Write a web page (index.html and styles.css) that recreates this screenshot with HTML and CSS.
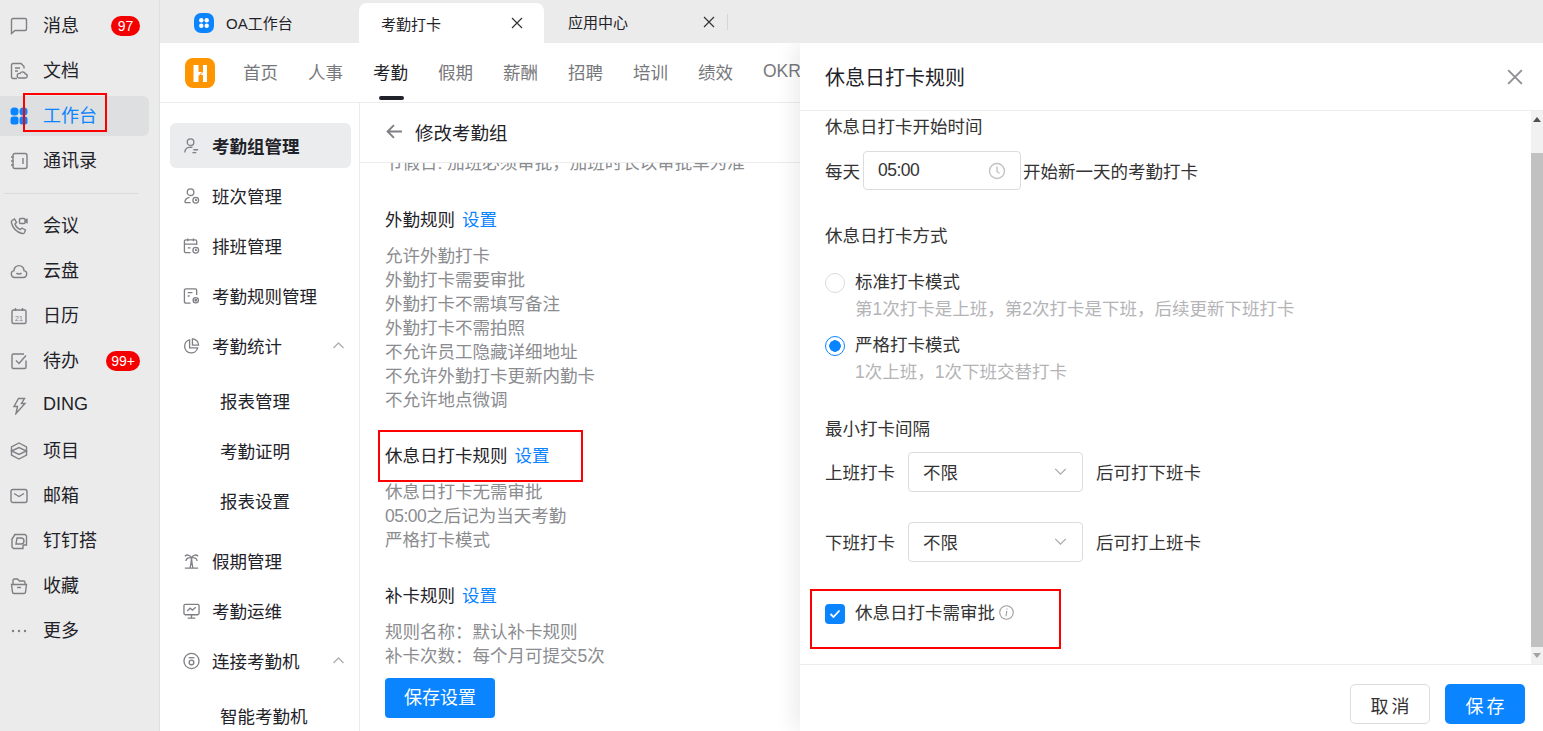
FILE: index.html
```html
<!DOCTYPE html>
<html lang="zh">
<head>
  <meta charset="UTF-8">
  <title>考勤打卡</title>
  <link rel="stylesheet" href="styles.css">
</head>
<body>
  <div class="app">
    <nav class="rail">
      <div class="rail-item"><svg class="rail-icon" viewBox="0 0 18 18"><path d="M3 1.500h12a1.500 1.500 0 0 1 1.500 1.500v9a1.500 1.500 0 0 1-1.500 1.500H5L1.500 16.500V3A1.500 1.500 0 0 1 3 1.500z"/></svg><span class="rail-label">消息</span><span class="badge">97</span></div>
      <div class="rail-item"><svg class="rail-icon" viewBox="0 0 18 18"><path d="M7 16.500H3a1.500 1.500 0 0 1-1.500-1.500V3A1.500 1.500 0 0 1 3 1.500h8l3 3v2M5 6h5M5 9h3"/><path d="M9 16h6a2 2 0 0 0 .500-4 3 3 0 0 0-5.500-.500A2.300 2.300 0 0 0 9 16z"/></svg><span class="rail-label">文档</span></div>
      <div class="rail-item active"><svg class="rail-icon" viewBox="0 0 18 18"><rect class="fill-blue" x=".500" y=".500" width="8" height="8" rx="3.500"/><rect class="fill-blue" x="9.500" y=".500" width="8" height="8" rx="3.500"/><rect class="fill-blue" x=".500" y="9.500" width="8" height="8" rx="2.500"/><rect class="fill-blue" x="9.500" y="9.500" width="8" height="8" rx="2.500"/></svg><span class="rail-label">工作台</span></div>
      <div class="rail-item"><svg class="rail-icon" viewBox="0 0 18 18"><rect x="3" y="1.500" width="14" height="15" rx="2"/><path d="M1 5h2.500M1 9h2.500M1 13h2.500M13 6v6"/></svg><span class="rail-label">通讯录</span></div>
      <div class="rail-line"></div>
      <div class="rail-item"><svg class="rail-icon" viewBox="0 0 18 18"><path d="M2 3.500 4.500 2l2 3.500L5 7c.8 2.500 2.700 4.500 5.500 5.500L12 11l3.500 2-1 2.500c-.5 1-1.500 1.300-2.500 1C6.500 15 2.800 11 1.500 6c-.2-1 0-2 .5-2.500z"/><rect x="9.500" y="1.500" width="5.500" height="5" rx="1"/><path d="M15 3.500l2-1v3l-2-1"/></svg><span class="rail-label">会议</span></div>
      <div class="rail-item"><svg class="rail-icon" viewBox="0 0 18 18"><path d="M5 15.500a3.500 3.500 0 0 1-1-6.900 5 5 0 0 1 10 0 3.500 3.500 0 0 1-1 6.900z"/><path d="M6.500 11c1 1.300 4 1.300 5 0"/></svg><span class="rail-label">云盘</span></div>
      <div class="rail-item"><svg class="rail-icon" viewBox="0 0 18 18"><rect x="2" y="3" width="14" height="13.500" rx="1.500"/><path d="M5.500 1v3M12.500 1v3"/><text class="cal-num" x="9" y="13.500">21</text></svg><span class="rail-label">日历</span></div>
      <div class="rail-item"><svg class="rail-icon" viewBox="0 0 18 18"><path d="M16 8.500V15a1.500 1.500 0 0 1-1.500 1.500H3.500A1.500 1.500 0 0 1 2 15V3.500A1.500 1.500 0 0 1 3.500 2H14"/><path d="M6 8.500l3 3 7-8"/></svg><span class="rail-label">待办</span><span class="badge wide">99+</span></div>
      <div class="rail-item"><svg class="rail-icon" viewBox="0 0 18 18"><path d="M8.500 1.500h6l-3 5h3.500L6 16.500l1.500-7H4z"/></svg><span class="rail-label">DING</span></div>
      <div class="rail-item"><svg class="rail-icon" viewBox="0 0 18 18"><path d="M9 1l7.500 4v8L9 17l-7.500-4V5z"/><path d="M1.500 9L9 5.500 16.500 9 9 12.500z"/></svg><span class="rail-label">项目</span></div>
      <div class="rail-item"><svg class="rail-icon" viewBox="0 0 18 18"><rect x="1" y="2.500" width="16" height="13" rx="2"/><path d="M4 6.500l5 3 5-3"/></svg><span class="rail-label">邮箱</span></div>
      <div class="rail-item"><svg class="rail-icon" viewBox="0 0 18 18"><path d="M4 2.500h11l1.500 1.500v9H13"/><path d="M5 2.500L2 7v8l1.500 1.500H13V13"/><path d="M7 6h4a2.500 2.500 0 0 1 0 6H6z"/></svg><span class="rail-label">钉钉搭</span></div>
      <div class="rail-item"><svg class="rail-icon" viewBox="0 0 18 18"><path d="M3 7V3.500A1.500 1.500 0 0 1 4.500 2h3l2 2h4A1.500 1.500 0 0 1 15 5.500V7"/><path d="M1.500 7.500h15L15.500 15a1.500 1.500 0 0 1-1.500 1.500H4A1.500 1.500 0 0 1 2.500 15z"/><path d="M7 10.500h4"/></svg><span class="rail-label">收藏</span></div>
      <div class="rail-item"><svg class="rail-icon" viewBox="0 0 18 18"><circle class="fill-grey" cx="3" cy="9" r="1.200"/><circle class="fill-grey" cx="9" cy="9" r="1.200"/><circle class="fill-grey" cx="15" cy="9" r="1.200"/></svg><span class="rail-label">更多</span></div>
      <div class="mark mark-work"></div>
    </nav>

    <div class="main">
      <div class="tabs">
        <div class="tab tab-oa"><span class="oa-logo"><svg viewBox="0 0 20 20"><circle cx="7.300" cy="7.300" r="2.200"/><circle cx="12.700" cy="7.300" r="2.200"/><circle cx="7.300" cy="12.700" r="2.200"/><circle cx="12.700" cy="12.700" r="2.200"/></svg></span>OA工作台</div>
        <div class="tab tab-on">考勤打卡<svg class="tab-x" viewBox="0 0 12 12"><path d="M1 1l10 10M11 1L1 11"/></svg></div>
        <div class="tab tab-app">应用中心<svg class="tab-x" viewBox="0 0 12 12"><path d="M1 1l10 10M11 1L1 11"/></svg><span class="tab-sep"></span></div>
      </div>

      <div class="page">
        <header class="top">
          <span class="h-logo"><svg viewBox="0 0 30 30"><path d="M8.500 7h5v7h3.500l-3.500 4v6h-5z"/><path d="M18 7h4v17h-4v-7h-2.500l2.500-3z"/></svg></span>
          <a class="top-link">首页</a>
          <a class="top-link">人事</a>
          <a class="top-link on">考勤</a>
          <a class="top-link">假期</a>
          <a class="top-link">薪酬</a>
          <a class="top-link">招聘</a>
          <a class="top-link">培训</a>
          <a class="top-link">绩效</a>
          <a class="top-link">OKR</a>
        </header>

        <div class="body">
          <aside class="side">
            <div class="side-item on"><svg class="side-icon" viewBox="0 0 18 18"><circle cx="8" cy="5" r="3.500"/><path d="M2 16c0-3 1.500-5 4-5.500h4M11 13h5M10 16h4"/></svg>考勤组管理</div>
            <div class="side-item"><svg class="side-icon" viewBox="0 0 18 18"><circle cx="8" cy="5" r="3.500"/><path d="M2 16c0-3 1.500-5 5-5.500M2 16h6"/><circle cx="13.500" cy="13.500" r="3"/><path d="M13.500 12v1.500h1.300"/></svg>班次管理</div>
            <div class="side-item"><svg class="side-icon" viewBox="0 0 18 18"><path d="M8 16H3a1.500 1.500 0 0 1-1.500-1.500V4A1.500 1.500 0 0 1 3 2.500h10A1.500 1.500 0 0 1 14.500 4v4M1.500 7h13M5 1v3M11 1v3M5 11h3"/><circle cx="13.500" cy="13.500" r="3"/><path d="M13.500 12v1.500h1.300"/></svg>排班管理</div>
            <div class="side-item"><svg class="side-icon" viewBox="0 0 18 18"><path d="M8 16.500H3A1.500 1.500 0 0 1 1.500 15V3A1.500 1.500 0 0 1 3 1.500h10A1.500 1.500 0 0 1 14.500 3v5M5 5.500h5M5 9h2"/><circle cx="13.500" cy="13.500" r="2.800"/><circle cx="13.500" cy="13.500" r=".8"/></svg>考勤规则管理</div>
            <div class="side-item"><svg class="side-icon" viewBox="0 0 18 18"><path d="M7 2.500a7 7 0 1 0 8.500 8.500H7z"/><path d="M10 1.500a6.500 6.500 0 0 1 6.500 6.500H10z"/></svg>考勤统计<svg class="chev" viewBox="0 0 12 7"><path d="M1 6l5-5 5 5"/></svg></div>
            <div class="side-sub first">报表管理</div>
            <div class="side-sub">考勤证明</div>
            <div class="side-sub last">报表设置</div>
            <div class="side-item"><svg class="side-icon" viewBox="0 0 18 18"><path d="M2 16.500h14M9 5.500c-.2 4-.8 8-1.500 11M9 5.500c.2 4 .8 8 1.500 11M9 5.500C7 2 4 2 2 4M9 5.500C11 2 14 2 16 4M9 5.500C6 5 3.500 6 3 9M9 5.500c3-.5 5.500.5 6 3.500"/></svg>假期管理</div>
            <div class="side-item"><svg class="side-icon" viewBox="0 0 18 18"><rect x="1" y="2" width="16" height="11" rx="1.500"/><path d="M4.500 9l3-3 2.500 2 3.500-3M9 13v3.500M5 16.500h8"/></svg>考勤运维</div>
            <div class="side-item"><svg class="side-icon" viewBox="0 0 18 18"><circle cx="9" cy="9" r="8"/><path d="M6 5.500h6"/><circle cx="9" cy="10.500" r="2.500"/></svg>连接考勤机<svg class="chev" viewBox="0 0 12 7"><path d="M1 6l5-5 5 5"/></svg></div>
            <div class="side-sub first">智能考勤机</div>
          </aside>

          <section class="content">
            <div class="content-head"><svg class="back" viewBox="0 0 16 14"><path d="M15 7H1.500M7.500 1L1.500 7l6 6"/></svg>修改考勤组</div>
            <div class="content-scroll">
              <div class="cut-line"><span>节假日: 加班必须审批，加班时长以审批单为准</span></div>
              <div class="rule">
                <div class="rule-title">外勤规则<a class="set">设置</a></div>
                <p>允许外勤打卡</p>
                <p>外勤打卡需要审批</p>
                <p>外勤打卡不需填写备注</p>
                <p>外勤打卡不需拍照</p>
                <p>不允许员工隐藏详细地址</p>
                <p>不允许外勤打卡更新内勤卡</p>
                <p>不允许地点微调</p>
              </div>
              <div class="rule rule-rest">
                <div class="rule-title">休息日打卡规则<a class="set">设置</a></div>
                <div class="mark mark-rest"></div>
                <p>休息日打卡无需审批</p>
                <p><span class="digits">05:00</span>之后记为当天考勤</p>
                <p>严格打卡模式</p>
              </div>
              <div class="rule rule-fix">
                <div class="rule-title">补卡规则<a class="set">设置</a></div>
                <p>规则名称：默认补卡规则</p>
                <p>补卡次数：每个月可提交5次</p>
              </div>
              <button class="save-all">保存设置</button>
            </div>
          </section>
        </div>

        <div class="drawer">
          <div class="drawer-head">休息日打卡规则<svg class="drawer-x" viewBox="0 0 14 14"><path d="M1 1l12 12M13 1L1 13"/></svg></div>
          <div class="drawer-body">
            <div class="form">
              <div class="f-title">休息日打卡开始时间</div>
              <div class="f-row row-time">每天<span class="time-box"><span class="digits">05:00</span><svg class="clock" viewBox="0 0 18 18"><circle cx="9" cy="9" r="7.500"/><path d="M9 4.500V9.500l2.500 2"/></svg></span>开始新一天的考勤打卡</div>
              <div class="f-title t-way">休息日打卡方式</div>
              <div class="opt o-std"><span class="radio"></span><div><div class="opt-name">标准打卡模式</div><div class="opt-hint">第1次打卡是上班，第2次打卡是下班，后续更新下班打卡</div></div></div>
              <div class="opt"><span class="radio on"></span><div><div class="opt-name">严格打卡模式</div><div class="opt-hint">1次上班，1次下班交替打卡</div></div></div>
              <div class="f-title t-gap">最小打卡间隔</div>
              <div class="f-row row-sel">上班打卡<span class="sel">不限<svg class="sel-arrow" viewBox="0 0 14 8"><path d="M1 1l6 6 6-6"/></svg></span><span class="after">后可打下班卡</span></div>
              <div class="f-row row-sel row-sel2">下班打卡<span class="sel">不限<svg class="sel-arrow" viewBox="0 0 14 8"><path d="M1 1l6 6 6-6"/></svg></span><span class="after">后可打上班卡</span></div>
              <div class="check-row"><span class="check"><svg viewBox="0 0 12 10"><path d="M1.500 5l3 3 6-6.500"/></svg></span>休息日打卡需审批<svg class="info" viewBox="0 0 14 14"><circle cx="7" cy="7" r="6.300"/><path d="M7.300 5.500L6.500 10.500M7.500 3.300v.8"/></svg><div class="mark mark-check"></div></div>
            </div>
            <div class="bar"><span class="bar-up"></span><span class="bar-thumb"></span><span class="bar-down"></span></div>
          </div>
          <div class="drawer-foot"><button class="btn">取消</button><button class="btn primary">保存</button></div>
        </div>
      </div>
    </div>
  </div>
</body>
</html>
```

FILE: styles.css
```css
* {
  box-sizing: border-box;
}

html,
body {
  margin: 0;
  height: 100%;
  overflow: hidden;
}

body {
  font-family: "Liberation Sans", "Noto Sans CJK SC", sans-serif;
  font-size: 16px;
  color: #222;
  background-color: #ebebeb;
}

p {
  margin: 0;
}

svg {
  fill: none;
  stroke: #7f7f85;
  stroke-width: 1.400;
  flex-shrink: 0;
}

.digits {
  letter-spacing: -0.5px;
}

.app {
  display: flex;
  width: 1543px;
  height: 731px;
}

/* left rail */
.rail {
  position: relative;
  width: 160px;
  flex-shrink: 0;
  padding-top: 6px;
  border-right: 1px solid #e0e0e0;
}

.rail-item {
  display: flex;
  align-items: center;
  width: 149px;
  height: 40px;
  margin-bottom: 5px;
  padding-left: 10px;
  border-radius: 0 6px 6px 0;
  font-size: 18px;
  color: #1f2329;
}

.rail-icon {
  width: 18px;
  height: 18px;
}

.rail-label {
  margin-left: 15px;
  margin-bottom: 4px;
}

.rail-item.active {
  background-color: #dedfe1;
}

.rail-item.active .rail-label {
  color: #0a84ff;
}

.fill-blue {
  fill: #0a84ff;
  stroke: none;
}

.fill-grey {
  fill: #7f7f85;
  stroke: none;
}

.cal-num {
  font-size: 7px;
  fill: #7f7f85;
  stroke: none;
  text-anchor: middle;
}

.badge {
  margin-left: auto;
  margin-right: 9px;
  height: 20px;
  min-width: 29px;
  border-radius: 10px;
  background-color: #f50000;
  color: #fff;
  font-size: 14px;
  line-height: 20px;
  text-align: center;
}

.badge.wide {
  min-width: 34px;
}

.rail-line {
  height: 1px;
  width: 135px;
  margin: 12px 0 12px 4px;
  background-color: #dcdcdc;
}

.mark {
  position: absolute;
  border: 2px solid #f00;
}

.mark-work {
  left: 23px;
  top: 93px;
  width: 84px;
  height: 39px;
}

/* tabs */
.main {
  flex: 1;
  min-width: 0;
  display: flex;
  flex-direction: column;
}

.tabs {
  display: flex;
  height: 43px;
  flex-shrink: 0;
  font-size: 15px;
  white-space: nowrap;
}

.tab {
  display: flex;
  align-items: center;
  color: #1f2329;
}

.tab-oa {
  width: 199px;
  padding: 2px 0 0 34px;
}

.oa-logo {
  width: 20px;
  height: 20px;
  margin-right: 12px;
  border-radius: 7px;
  background-color: #0a84ff;
}

.oa-logo svg {
  display: block;
  width: 20px;
  height: 20px;
  fill: #fff;
  stroke: none;
}

.tab-on {
  width: 185px;
  margin-top: 3px;
  padding-left: 22px;
  border-radius: 8px 8px 0 0;
  background-color: #fff;
}

.tab-app {
  width: 185px;
  padding: 0 0 0 24px;
}

.tab-x {
  width: 12px;
  height: 12px;
  margin-left: auto;
  margin-right: 21px;
  stroke: #333;
  stroke-width: 1.200;
}

.tab-app .tab-x {
  margin-right: 0;
  margin-left: 75px;
}

.tab-sep {
  width: 1px;
  height: 16px;
  margin-left: 12px;
  background-color: #d5d5d5;
}

/* page */
.page {
  position: relative;
  flex: 1;
  min-height: 0;
  background-color: #fff;
  display: flex;
  flex-direction: column;
  overflow: hidden;
}

.top {
  display: flex;
  align-items: center;
  height: 60px;
  flex-shrink: 0;
  padding-left: 25px;
  border-bottom: 1px solid #ececec;
}

.h-logo {
  width: 30px;
  height: 30px;
  margin-right: 28px;
  border-radius: 8px;
  background-color: #ff9500;
}

.h-logo svg {
  display: block;
  fill: #fff;
  stroke: none;
}

.top-link {
  position: relative;
  width: 65px;
  margin-bottom: 3px;
  font-size: 17.500px;
  color: #77787c;
}

.top-link.on {
  color: #1f2329;
}

.top-link.on::after {
  content: "";
  position: absolute;
  left: 6px;
  bottom: -16px;
  width: 25px;
  height: 4px;
  border-radius: 2px;
  background-color: #1f2329;
}

.body {
  flex: 1;
  min-height: 0;
  display: flex;
}

/* second menu */
.side {
  width: 200px;
  flex-shrink: 0;
  padding: 20px 8px 0 10px;
  border-right: 1px solid #ececec;
  overflow: hidden;
}

.side-item {
  display: flex;
  align-items: center;
  height: 45px;
  margin-bottom: 5px;
  padding-left: 13px;
  border-radius: 6px;
  font-size: 17.500px;
  color: #1f2329;
}

.side-item.on {
  background-color: #ebecee;
  font-weight: 700;
}

.side-icon {
  width: 17px;
  height: 18px;
  margin-right: 12px;
}

.chev {
  width: 13px;
  height: 7px;
  margin-left: auto;
  margin-right: 6px;
  stroke: #b0b0b4;
}

.side-sub {
  height: 45px;
  margin-bottom: 5px;
  padding-left: 50px;
  line-height: 45px;
  font-size: 17.500px;
  color: #1f2329;
}

.side-sub.first {
  margin-top: 12px;
}

.side-sub.last {
  margin-bottom: 13px;
}

/* middle column */
.content {
  flex: 1;
  min-width: 0;
  display: flex;
  flex-direction: column;
}

.content-head {
  display: flex;
  align-items: center;
  height: 59px;
  flex-shrink: 0;
  padding: 0 0 2px 26px;
  font-size: 18.500px;
  color: #1f2329;
}

.back {
  width: 17px;
  height: 15px;
  margin-right: 12px;
  stroke-width: 1.800;
}

.content-scroll {
  flex: 1;
  min-height: 0;
  overflow: hidden;
  padding-left: 25px;
  border-top: 1px solid #ececec;
  font-size: 17.500px;
  line-height: 24px;
  color: #8b8c90;
}

.cut-line {
  height: 12px;
  overflow: hidden;
  white-space: nowrap;
}

.cut-line span {
  display: block;
  margin-top: -6px;
  line-height: 12px;
}

.rule {
  margin-top: 33px;
}

.rule-title {
  height: 24px;
  margin-bottom: 12px;
  color: #1f2329;
}

.set {
  margin-left: 7px;
  color: #0a84ff;
}

.rule-rest {
  position: relative;
  margin-top: 32px;
}

.mark-rest {
  left: -7px;
  top: -14px;
  width: 205px;
  height: 52px;
}

.rule-fix {
  margin-top: 32px;
}

.save-all {
  display: block;
  width: 110px;
  height: 40px;
  margin-top: 10px;
  border: none;
  border-radius: 4px;
  background-color: #0a84ff;
  color: #fff;
  font: inherit;
  font-size: 18px;
}

/* drawer over the page */
.drawer {
  position: absolute;
  right: 0;
  top: 0;
  bottom: 0;
  width: 743px;
  display: flex;
  flex-direction: column;
  background-color: #fff;
  box-shadow: -6px 0 20px rgba(0, 0, 0, 0.08);
}

.drawer-head {
  display: flex;
  align-items: center;
  justify-content: space-between;
  height: 68px;
  flex-shrink: 0;
  padding: 0 20px 0 25px;
  border-bottom: 1px solid #ececec;
  font-size: 20px;
  color: #1f2329;
}

.drawer-x {
  width: 16px;
  height: 16px;
  stroke: #8f9094;
  stroke-width: 1.700;
}

.drawer-body {
  flex: 1;
  min-height: 0;
  display: flex;
}

.form {
  flex: 1;
  min-width: 0;
  padding: 1px 0 0 25px;
  font-size: 17.500px;
  color: #333;
}

.f-title {
  height: 30px;
  line-height: 30px;
}

.f-row {
  display: flex;
  align-items: center;
}

.row-time {
  margin-top: 9px;
}

.time-box {
  display: flex;
  align-items: center;
  justify-content: space-between;
  width: 158px;
  height: 39px;
  margin: 0 2px 0 3px;
  padding: 0 14px 0 14px;
  border: 1px solid #dcdcdc;
  border-radius: 4px;
}

.clock {
  width: 18px;
  height: 18px;
  stroke: #c3c3c6;
}

.t-way {
  margin-top: 31px;
}

.opt {
  display: flex;
  line-height: 24px;
  margin-bottom: 12px;
}

.o-std {
  margin-top: 19px;
}

.radio {
  width: 20px;
  height: 20px;
  margin: 3px 10px 0 0;
  border: 1px solid #dcdcdc;
  border-radius: 50%;
}

.radio.on {
  border-color: #0a84ff;
  background: radial-gradient(circle, #0a84ff 0 5.500px, #fff 6px);
}

.opt-hint {
  margin-top: 3px;
  color: #b4b4b7;
}

.t-gap {
  margin-top: 30px;
}

.row-sel {
  margin-top: 6px;
}

.row-sel2 {
  margin-top: 28px;
}

.sel {
  display: flex;
  align-items: center;
  justify-content: space-between;
  width: 175px;
  height: 40px;
  margin: 2px 13px 0 13px;
  padding: 0 15px 2px 14px;
  border: 1px solid #dcdcdc;
  border-radius: 4px;
}

.sel-arrow {
  width: 13px;
  height: 7px;
  stroke: #a7a7aa;
}

.check-row {
  position: relative;
  display: flex;
  align-items: center;
  margin-top: 37px;
  height: 24px;
}

.check {
  display: flex;
  align-items: center;
  justify-content: center;
  width: 20px;
  height: 20px;
  margin: 6px 10px 0 0;
  border-radius: 4px;
  background-color: #0a84ff;
}

.check svg {
  width: 12px;
  height: 10px;
  stroke: #fff;
  stroke-width: 1.800;
}

.info {
  width: 15px;
  height: 15px;
  margin: 2px 0 0 4px;
  stroke: #9c9c9f;
  stroke-width: 1;
}

.mark-check {
  left: -15px;
  top: -10px;
  width: 251px;
  height: 60px;
}

.bar {
  display: flex;
  flex-direction: column;
  width: 12px;
  flex-shrink: 0;
  background-color: #f1f1f1;
}

.bar-up,
.bar-down {
  width: 12px;
  height: 17px;
  flex-shrink: 0;
  position: relative;
}

.bar-up::after,
.bar-down::after {
  content: "";
  position: absolute;
  left: 2px;
  top: 6px;
  border-left: 4px solid transparent;
  border-right: 4px solid transparent;
  border-bottom: 5px solid #505050;
}

.bar-down::after {
  border-bottom: none;
  border-top: 5px solid #a3a3a3;
}

.bar-up {
  height: 42px;
}

.bar-thumb {
  flex: 1;
  background-color: #c1c1c1;
}

.drawer-foot {
  display: flex;
  justify-content: flex-end;
  gap: 15px;
  height: 67px;
  flex-shrink: 0;
  padding: 19px 18px 0 0;
  border-top: 1px solid #ececec;
}

.btn {
  width: 80px;
  height: 40px;
  padding: 1px 0 0 3px;
  border: 1px solid #dcdcdc;
  border-radius: 5px;
  background-color: #fff;
  color: #333;
  font: inherit;
  font-size: 18px;
  letter-spacing: 3px;
}

.btn.primary {
  border: none;
  background-color: #0a84ff;
  color: #fff;
}
```
